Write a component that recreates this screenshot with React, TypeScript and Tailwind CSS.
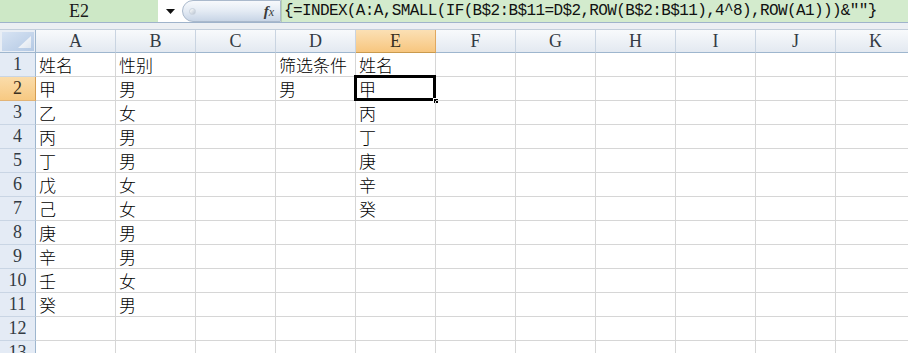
import React from "react";

const cols = ["A", "B", "C", "D", "E", "F", "G", "H", "I", "J", "K"];

const data: Record<string, string> = {
  A1: "姓名", B1: "性别", D1: "筛选条件", E1: "姓名",
  A2: "甲", B2: "男", D2: "男", E2: "甲",
  A3: "乙", B3: "女", E3: "丙",
  A4: "丙", B4: "男", E4: "丁",
  A5: "丁", B5: "男", E5: "庚",
  A6: "戊", B6: "女", E6: "辛",
  A7: "己", B7: "女", E7: "癸",
  A8: "庚", B8: "男",
  A9: "辛", B9: "男",
  A10: "壬", B10: "女",
  A11: "癸", B11: "男",
};

const cjk = { fontFamily: "'Noto Sans CJK SC', 'Noto Sans', sans-serif" };
const serif = { fontFamily: "'Liberation Serif', 'Noto Sans CJK SC', serif" };
const mono = { fontFamily: "'Liberation Mono', 'DejaVu Sans Mono', monospace" };

function FormulaBar() {
  return (
    <div className="flex h-[23px] border-b border-[#9fb3cb]">
      <div
        className="w-[158px] shrink-0 flex items-center justify-center bg-[#cde8c6] text-[18px] text-[#1a1a1a]"
        style={serif}
      >
        E2
      </div>
      <div className="w-[24px] shrink-0 bg-white flex items-center justify-center">
        <svg width="9" height="5" viewBox="0 0 9 5">
          <polygon points="0,0 9,0 4.5,5" fill="#111" />
        </svg>
      </div>
      <div className="w-[99px] shrink-0 bg-white flex items-center">
        <div className="relative h-[22px] w-[99px] rounded-l-full border border-[#aab9cc] bg-gradient-to-b from-[#f7f9fc] via-[#e4ebf4] to-[#c8d5e6] flex items-center justify-end pr-[6px]">
          <div className="absolute left-[6px] top-[7px] w-[7px] h-[7px] rounded-full bg-gradient-to-br from-[#ffffff] to-[#b9c4d1] border border-[#c9d2dd]" />
          <span className="text-[15px] text-[#3a3a3a] leading-none" style={serif}>
            <span className="italic font-bold">f</span>
            <span className="italic text-[12px]">x</span>
          </span>
        </div>
      </div>
      <div
        className="flex-1 bg-[#d3ebcd] flex items-center pl-[2px] text-[16px] tracking-[-0.62px] text-[#111] whitespace-nowrap overflow-hidden border-l border-[#b7cfb2]"
        style={mono}
      >
        {'{=INDEX(A:A,SMALL(IF(B$2:B$11=D$2,ROW(B$2:B$11),4^8),ROW(A1)))&""}'}
      </div>
    </div>
  );
}

function Corner() {
  return (
    <div className="w-[36px] shrink-0 h-full border-r border-b border-[#9eb6ce] bg-[#e9eef5] flex items-center justify-center">
      <svg width="32" height="19" viewBox="0 0 32 19">
        <defs>
          <linearGradient id="g" x1="0" y1="0" x2="1" y2="1">
            <stop offset="0" stopColor="#d7e3f3" />
            <stop offset="1" stopColor="#b4c9e4" />
          </linearGradient>
          <linearGradient id="t" x1="0" y1="0" x2="1" y2="1">
            <stop offset="0" stopColor="#ffffff" />
            <stop offset="1" stopColor="#dfe6ef" />
          </linearGradient>
        </defs>
        <rect x="0" y="0" width="32" height="19" fill="url(#g)" />
        <polygon points="29,4 29,16 16,16" fill="url(#t)" />
      </svg>
    </div>
  );
}

export default function App() {
  const rows = Array.from({ length: 13 }, (_, i) => i + 1);
  return (
    <div className="w-[908px] h-[353px] overflow-hidden bg-white">
      <FormulaBar />
      <div className="h-[7px] bg-[#eceff3] border-b border-[#c3cedb]" />
      <div className="flex h-[23px]">
        <Corner />
        {cols.map((c) => (
          <div
            key={c}
            className={
              c === "E"
                ? "w-[80px] shrink-0 h-full border-r border-b border-r-[#e0a860] border-b-[#c99a4e] bg-gradient-to-b from-[#fbe0b4] to-[#f7c67f] flex items-center justify-center text-[18px] text-[#3a3020]"
                : "w-[80px] shrink-0 h-full border-r border-b border-r-[#c9d4e1] border-b-[#9eb6ce] bg-gradient-to-b from-[#f8fafc] to-[#e3e9f1] flex items-center justify-center text-[18px] text-[#333b44]"
            }
            style={serif}
          >
            {c}
          </div>
        ))}
      </div>
      {rows.map((r) => (
        <div key={r} className="flex h-[24px]">
          <div
            className={
              r === 2
                ? "w-[36px] shrink-0 h-full border-r border-b border-r-[#d59d52] border-b-[#e2b477] bg-gradient-to-b from-[#fadcaa] to-[#f7c982] flex items-center justify-center text-[18px] text-[#3a3020]"
                : "w-[36px] shrink-0 h-full border-r border-b border-r-[#9eb6ce] border-b-[#c9d5e4] bg-[#e4ebf5] flex items-center justify-center text-[18px] text-[#333b44]"
            }
            style={serif}
          >
            {r}
          </div>
          {cols.map((c) => {
            const key = `${c}${r}`;
            const v = data[key];
            const sel = key === "E2";
            return (
              <div
                key={key}
                className="relative w-[80px] shrink-0 h-full border-r border-b border-[#d6d6d6] flex items-center pl-[3px] text-[17px] leading-[20px] font-light text-black whitespace-nowrap"
                style={cjk}
              >
                {v}
                {sel && (
                  <>
                    <div className="absolute left-[-2px] top-[-2px] w-[82px] h-[26px] border-[3px] border-black" />
                    <div className="absolute right-[-4px] bottom-[-4px] w-[6px] h-[6px] bg-black border border-white" />
                  </>
                )}
              </div>
            );
          })}
        </div>
      ))}
    </div>
  );
}
